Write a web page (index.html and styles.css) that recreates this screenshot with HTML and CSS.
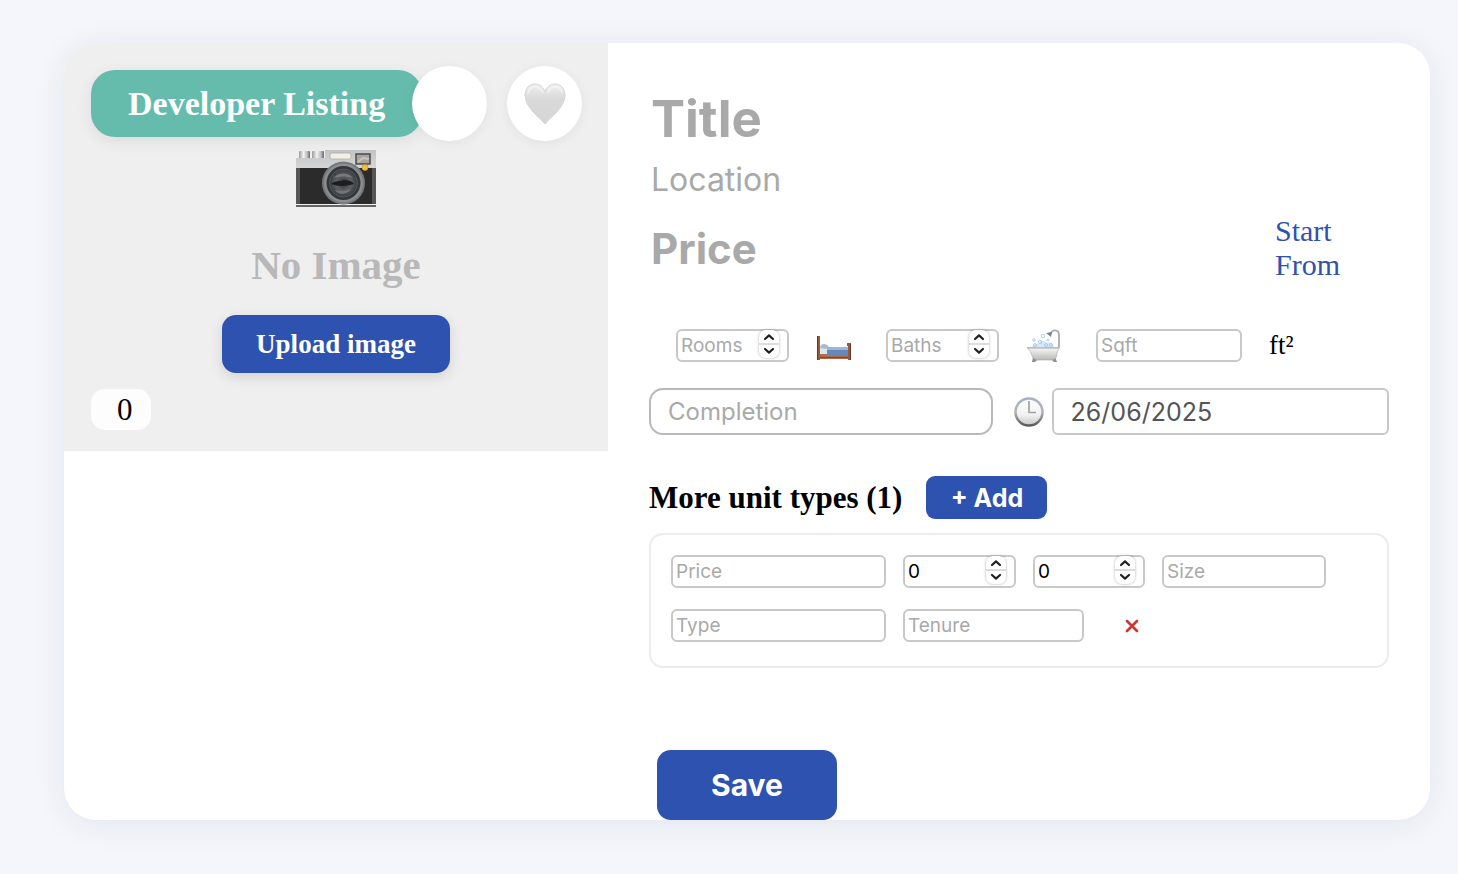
FILE: index.html
```html
<!DOCTYPE html>
<html lang="en">
<head>
<meta charset="utf-8">
<title>Developer Listing</title>
<link rel="stylesheet" href="styles.css">
</head>
<body>
<svg width="0" height="0" class="defs" aria-hidden="true">
  <symbol id="arrows" viewBox="0 0 20 28">
    <rect x="0" y="13" width="20" height="2" fill="#dcdcdc"/>
    <path d="M6 9l4-3.6L14 9M6 19l4 3.6 4-3.6" fill="none" stroke="#222" stroke-width="2.2" stroke-linecap="round" stroke-linejoin="round"/>
  </symbol>
</svg>
<form class="card">
  <section class="media">
    <div class="media-bar">
      <span class="badge">Developer Listing</span>
      <button type="button" class="round" aria-label="Share"></button>
      <button type="button" class="round" aria-label="Favourite">
        <svg width="42" height="42" viewBox="0 0 42 42">
          <defs><linearGradient id="heart" x1="0" y1="0" x2="0" y2="1"><stop offset="0" stop-color="#efefef"/><stop offset=".35" stop-color="#dadada"/><stop offset="1" stop-color="#d5d5d5"/></linearGradient></defs>
          <path d="M21 41C17 35.500 1 25 1 12 1 5 5.500 1 11 1c5 0 8.500 3 10 8 1.500-5 5-8 10-8 5.500 0 10 4 10 11 0 13-16 23.500-20 29z" fill="url(#heart)" stroke="#d6d6d6" stroke-width="1"/>
          <path d="M4 10c1-4 4-6 7-6 4 0 6 2 7.500 5M24 9c1.500-3 4-5 7-5 4 0 6 2 7 5" fill="none" stroke="#f6f6f6" stroke-width="2" stroke-linecap="round" opacity=".6"/>
        </svg>
      </button>
    </div>
    <div class="empty">
      <svg width="80" height="58" viewBox="0 0 80 58" aria-hidden="true">
        <defs>
          <linearGradient id="metal" x1="0" y1="0" x2="0" y2="1"><stop offset="0" stop-color="#c0c2c4"/><stop offset="1" stop-color="#d6d7d9"/></linearGradient>
          <linearGradient id="knob"><stop offset="0" stop-color="#999"/><stop offset=".4" stop-color="#f3f3f3"/><stop offset=".75" stop-color="#bbb"/><stop offset="1" stop-color="#666"/></linearGradient>
          <radialGradient id="lens"><stop offset="0" stop-color="#333"/><stop offset=".55" stop-color="#5d6064"/><stop offset="1" stop-color="#383b3e"/></radialGradient>
        </defs>
        <rect x="3" y="1" width="11" height="9" rx="1" fill="url(#knob)"/>
        <rect x="16" y="1" width="12" height="9" rx="1" fill="url(#knob)"/>
        <path d="M0 8h29V0h51v19H0z" fill="url(#metal)"/>
        <path d="M0 18h80v37H0z" fill="#2b2b2c"/>
        <path d="M0 18h4v37H0zM76 18h4v37h-4z" fill="#555"/>
        <path d="M0 54h80v1H0z" fill="#eee"/><path d="M0 55h80v2H0z" fill="#666"/>
        <rect x="34" y="3" width="21" height="6" rx="2" fill="#f2f0e4" stroke="#a7a7a0" stroke-width=".7"/>
        <rect x="60" y="4" width="14" height="10" fill="#aaa49f" stroke="#444" stroke-width="1.400"/>
        <path d="M62 12l5-4 6 1" stroke="#c8c3be" stroke-width="2" fill="none"/>
        <circle cx="47.500" cy="33" r="21.500" fill="#75787b"/>
        <circle cx="47.500" cy="33" r="19.500" fill="#8b8e91"/>
        <circle cx="47.500" cy="33" r="17" fill="#34373a"/>
        <circle cx="47.500" cy="33" r="14" fill="url(#lens)" stroke="#55585b"/>
        <path d="M37 28c5-5 15-6 20 0-6-2-14-2-20 0z" fill="#777b80"/>
        <path d="M35 34c5-4 9-2 13-4 4 0 8 1 10 4-6 2-16 3-23 0z" fill="#1c1d20"/>
        <path d="M39 40c6 2 11 1 16-1-3 5-12 7-16 1z" fill="#73777a"/>
        <circle cx="69" cy="17.500" r="3" fill="#f0c23a" stroke="#b98e22" stroke-width=".6"/>
      </svg>
      <p class="empty-text">No Image</p>
      <button type="button" class="upload">Upload image</button>
    </div>
    <output class="count">0</output>
  </section>

  <section class="details">
    <input class="bare title" type="text" placeholder="Title" aria-label="Title">
    <input class="bare location" type="text" placeholder="Location" aria-label="Location">
    <div class="price-row">
      <input class="bare price" type="text" placeholder="Price" aria-label="Price">
      <a class="start" href="#">Start From</a>
    </div>

    <div class="metrics">
      <div class="metric">
        <span class="number"><input class="field" type="number" placeholder="Rooms" aria-label="Rooms"><svg class="step"><use href="#arrows"/></svg></span>
        <svg width="36" height="36" viewBox="0 -2 36 36" aria-hidden="true">
          <path d="M4 17l5-1 4 3v6H4z" fill="#dbe6f0"/><path d="M5 16c3-2 6-1 8 2l-3 2-6-1z" fill="#a9bccd"/>
          <path d="M11 18h21v9H11z" fill="#6688b8"/><path d="M11 18h21v3H11z" fill="#9cb5d6"/>
          <path d="M4 25h7v2h21v3H4z" fill="#ad6c49"/><path d="M4 28h28v1H4z" fill="#7c452c"/>
          <path d="M1 7h3v24H1zM31 14h4v17h-3V17h-1z" fill="#955b3c"/><path d="M1 7h1v24H1zM34 15h1v16h-1z" fill="#623a27"/>
        </svg>
      </div>
      <div class="metric">
        <span class="number"><input class="field" type="number" placeholder="Baths" aria-label="Baths"><svg class="step"><use href="#arrows"/></svg></span>
        <svg width="36" height="36" viewBox="0 -2 36 36" aria-hidden="true">
          <defs><linearGradient id="tub" x1="0" y1="0" x2="0" y2="1"><stop offset="0" stop-color="#f7f7f5"/><stop offset="1" stop-color="#b9b9b7"/></linearGradient></defs>
          <path d="M33 18V6c0-6-8-6-8-1" fill="none" stroke="#a4a9ae" stroke-width="1.700"/><path d="M20 4l6-1-1 5z" fill="#78818c"/>
          <path d="M6 19c0-4 4-5 7-4 0-4 6-4 7-1 4-2 8 0 8 5z" fill="#d4e8f7"/>
          <g fill="none" stroke="#8bbfe5" stroke-width=".7"><circle cx="8" cy="11" r="1.300"/><circle cx="17" cy="7" r="1.800"/><circle cx="14" cy="13" r="1.600"/><circle cx="9" cy="16" r="1.500"/><circle cx="20" cy="16" r="1.500"/><circle cx="25" cy="16" r="1.500"/><circle cx="22" cy="11" r="1"/></g>
          <path d="M7 28l-1 5h3l3-3zM29 28l2 5h-3l-3-3z" fill="#8f8f8f"/>
          <path d="M2 19h31c-1 3-2 4-2 6 0 4-3 6-6 6H12c-4 0-6-3-7-7-1-2-1-3-3-4z" fill="url(#tub)" stroke="#a5a5a3" stroke-width=".6"/>
          <path d="M1 18h33v1.500H1z" fill="#bdbdbb"/>
        </svg>
      </div>
      <div class="metric">
        <input class="field sqft" type="text" placeholder="Sqft" aria-label="Sqft">
        <span class="unit">ft²</span>
      </div>
    </div>

    <div class="dates">
      <input class="wide completion" type="text" placeholder="Completion" aria-label="Completion">
      <svg class="clock" width="30" height="30" viewBox="0 0 30 30" aria-hidden="true">
        <defs>
          <linearGradient id="rim" x1="0" y1="0" x2="0" y2="1"><stop offset="0" stop-color="#a4b1c5"/><stop offset=".5" stop-color="#b4b4b4"/><stop offset="1" stop-color="#5c5c5c"/></linearGradient>
          <linearGradient id="dial" x1="0" y1="0" x2="0" y2="1"><stop offset="0" stop-color="#fff"/><stop offset=".6" stop-color="#f2f2f2"/><stop offset="1" stop-color="#c5c5c5"/></linearGradient>
        </defs>
        <circle cx="15" cy="15" r="13.500" fill="url(#dial)" stroke="url(#rim)" stroke-width="2.500"/>
        <path d="M15 4v11.500h7" fill="none" stroke="#a3a3a3" stroke-width="1.700"/>
      </svg>
      <input class="wide date" type="text" value="26/06/2025" aria-label="Date">
    </div>

    <div class="units-head">
      <h2 class="units-title">More unit types (1)</h2>
      <button type="button" class="add">+ Add</button>
    </div>

    <div class="units">
      <input class="field" type="text" placeholder="Price" aria-label="Unit price">
      <span class="number"><input class="field" type="number" value="0" aria-label="Unit rooms"><svg class="step"><use href="#arrows"/></svg></span>
      <span class="number"><input class="field" type="number" value="0" aria-label="Unit baths"><svg class="step"><use href="#arrows"/></svg></span>
      <input class="field" type="text" placeholder="Size" aria-label="Unit size">
      <input class="field" type="text" placeholder="Type" aria-label="Unit type">
      <div class="tenure">
        <input class="field" type="text" placeholder="Tenure" aria-label="Tenure">
        <button type="button" class="remove" aria-label="Remove unit">
          <svg width="14" height="14" viewBox="0 0 14 14"><path d="M2 2l10 10M12 2L2 12" stroke="#c93a32" stroke-width="2.700" stroke-linecap="round"/></svg>
        </button>
      </div>
    </div>

    <button type="button" class="save">Save</button>
  </section>
</form>
</body>
</html>
```
FILE: styles.css
```css
* { box-sizing: border-box; }
body {
  margin: 0;
  padding: 43px 28px 54px 64px;
  background: #f4f6fb;
  color: #000;
  font-family: "Liberation Serif", "Times New Roman", serif;
}
button, input { margin: 0; font-family: Inter, sans-serif; }
button { border: 0; padding: 0; cursor: pointer; }
svg { display: block; flex: none; }
.defs { position: absolute; }
.card {
  display: grid;
  grid-template-columns: minmax(0, 272fr) minmax(0, 411fr);
  align-items: start;
  overflow: hidden;
  border-radius: 32px;
  background: #fff;
  box-shadow: 0 4px 32px rgba(30, 40, 80, 0.08);
}

.media {
  display: flex;
  flex-direction: column;
  aspect-ratio: 4 / 3;
  padding: 23px 27px 21px;
  background: #efefef;
}
.media-bar { display: flex; align-items: center; }
.badge {
  flex: 1;
  margin-right: -10px;
  padding: 0 37px;
  border-radius: 24px;
  background: #65bcad;
  box-shadow: 0 4px 16px rgba(0, 0, 0, 0.08);
  color: #fff;
  font-size: 34px;
  font-weight: 700;
  line-height: 67px;
  white-space: nowrap;
}
.round {
  display: grid;
  place-items: center;
  flex: none;
  width: 75px;
  height: 75px;
  border-radius: 50%;
  background: #fff;
  box-shadow: 0 2px 12px rgba(0, 0, 0, 0.06);
}
.round + .round { margin-left: 20px; }
.empty { display: flex; flex-direction: column; align-items: center; padding-top: 9px; }
.empty-text {
  margin: 33px 0 26px;
  color: #b8b8b8;
  font-size: 41px;
  font-weight: 700;
  line-height: 48px;
}
.upload {
  width: 228px;
  height: 58px;
  border-radius: 14px;
  background: #2e52b0;
  box-shadow: 0 4px 14px rgba(0, 0, 0, 0.12);
  color: #fff;
  font: 700 27px "Liberation Serif", serif;
}
.count {
  align-self: flex-start;
  margin-top: auto;
  padding: 0 18px 0 26px;
  border-radius: 14px;
  background: #fdfdfd;
  font-size: 31px;
  line-height: 41px;
}

.details { display: flex; flex-direction: column; padding: 43px 41px 0; }
.bare { width: 100%; border: 0; padding: 0 2px; background: none; }
::placeholder { color: #a9a9a9; opacity: 1; }
.title { height: 65px; font-size: 51px; font-weight: 700; }
.location { height: 44px; margin-top: 6px; font-size: 32px; }
.price-row { display: flex; align-items: center; margin-top: 13px; }
.price { flex: 1; min-width: 0; height: 56px; font-size: 42px; font-weight: 700; }
.start {
  width: 73px;
  margin-right: 41px;
  color: #2e52b0;
  font-size: 30px;
  line-height: 34px;
  text-decoration: none;
}

.metrics { display: flex; gap: 34px; height: 36px; margin: 45px 0 25px; padding-left: 27px; }
.metric { display: flex; align-items: center; gap: 27px; }
.metric .number { width: 113px; }
.number { position: relative; display: block; }
.field {
  display: block;
  width: 100%;
  height: 33px;
  border: 2px solid #c8c8c8;
  border-radius: 6px;
  padding: 0 3px;
  background: #fff;
  color: #000;
  font-size: 19px;
}
.field[type="number"] { appearance: textfield; }
.field::-webkit-inner-spin-button { display: none; }
.step {
  position: absolute;
  top: 1px;
  right: 10px;
  width: 20px;
  height: 28px;
  border-radius: 7px;
  background: #fff;
  box-shadow: 0 0 3px rgba(0, 0, 0, 0.3);
}
.sqft { width: 146px; }
.unit { font-size: 27px; }

.dates { display: flex; align-items: center; }
.wide {
  min-width: 0;
  height: 47px;
  border: 2px solid #c8c8c8;
  padding: 0 17px;
  background: #fff;
  color: #555;
  font-size: 24px;
}
.completion { flex: 344; border-color: #b9b9b9; border-radius: 14px; }
.clock { margin: 0 8px 0 21px; }
.date { flex: 337; border-radius: 6px; font-size: 25px; }

.units-head { display: flex; align-items: center; gap: 24px; margin-top: 41px; }
.units-title { margin: 0; font-size: 31px; line-height: 40px; }
.add {
  width: 121px;
  height: 43px;
  border-radius: 9px;
  background: #2e52b0;
  color: #fff;
  font-size: 25px;
  font-weight: 700;
}
.units {
  display: grid;
  grid-template-columns: minmax(0, 215fr) minmax(0, 113fr) minmax(0, 112fr) minmax(0, 164fr);
  gap: 21px 17px;
  margin-top: 14px;
  padding: 20px 61px 24px 20px;
  border: 2px solid #ececec;
  border-radius: 14px;
}
.tenure { grid-column: span 3; display: flex; align-items: center; gap: 41px; }
.tenure .field { width: 181px; }
.remove { background: none; }
.save {
  width: 180px;
  height: 70px;
  margin: 82px 0 0 8px;
  border-radius: 14px;
  background: #2e52b0;
  color: #fff;
  font-size: 30px;
  font-weight: 700;
}
```
